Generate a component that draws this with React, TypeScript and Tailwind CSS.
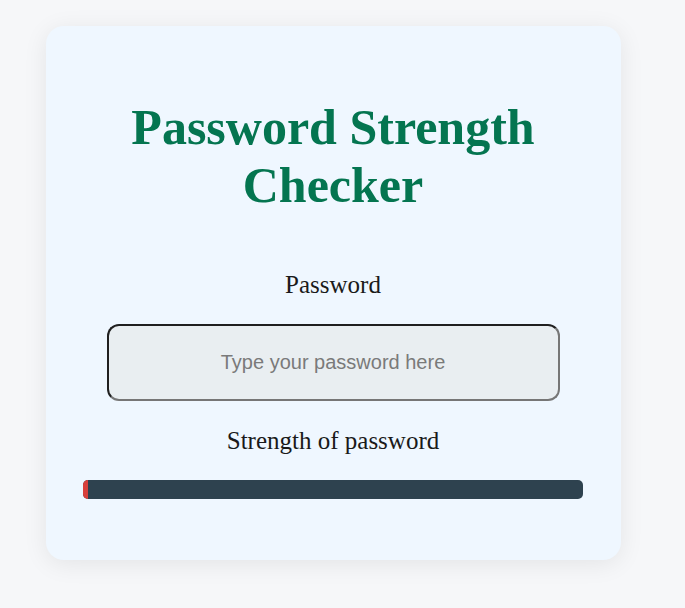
export default function App() {
  return (
    <div className="min-h-[608px] w-full bg-[#f6f7f9] pt-[26px] pl-[46px]" style={{ fontFamily: '"Liberation Serif", serif' }}>
      <div className="w-[575px] h-[534px] rounded-[18px] bg-[#eff7ff] shadow-[0_4px_24px_rgba(0,0,0,0.08)] flex flex-col items-center pt-[72px] pr-[1px]">
        <h1 className="text-[50px] leading-[58px] font-bold text-[#047550] text-center w-[430px]">Password Strength Checker</h1>
        <div className="mt-[56px] text-[25px] leading-[29px] text-[#1a1a1a]">Password</div>
        <input
          type="password"
          placeholder="Type your password here"
          className="mt-[25px] w-[453px] h-[77px] rounded-[12px] border-2 border-t-[#1f1f1f] border-l-[#1f1f1f] border-b-[#767676] border-r-[#767676] bg-[#e9eef1] text-center text-[20px] placeholder:text-[#7a7a7a] outline-none"
          style={{ fontFamily: '"Liberation Sans", Arial, sans-serif' }}
        />
        <div className="mt-[25px] text-[25px] leading-[29px] text-[#1a1a1a]">Strength of password</div>
        <div className="mt-[25px] w-[500px] h-[19px] rounded-[5px] bg-[#2e424f] overflow-hidden flex">
          <div className="w-[5px] h-full bg-[#d83f3b]" />
        </div>
      </div>
    </div>
  );
}
